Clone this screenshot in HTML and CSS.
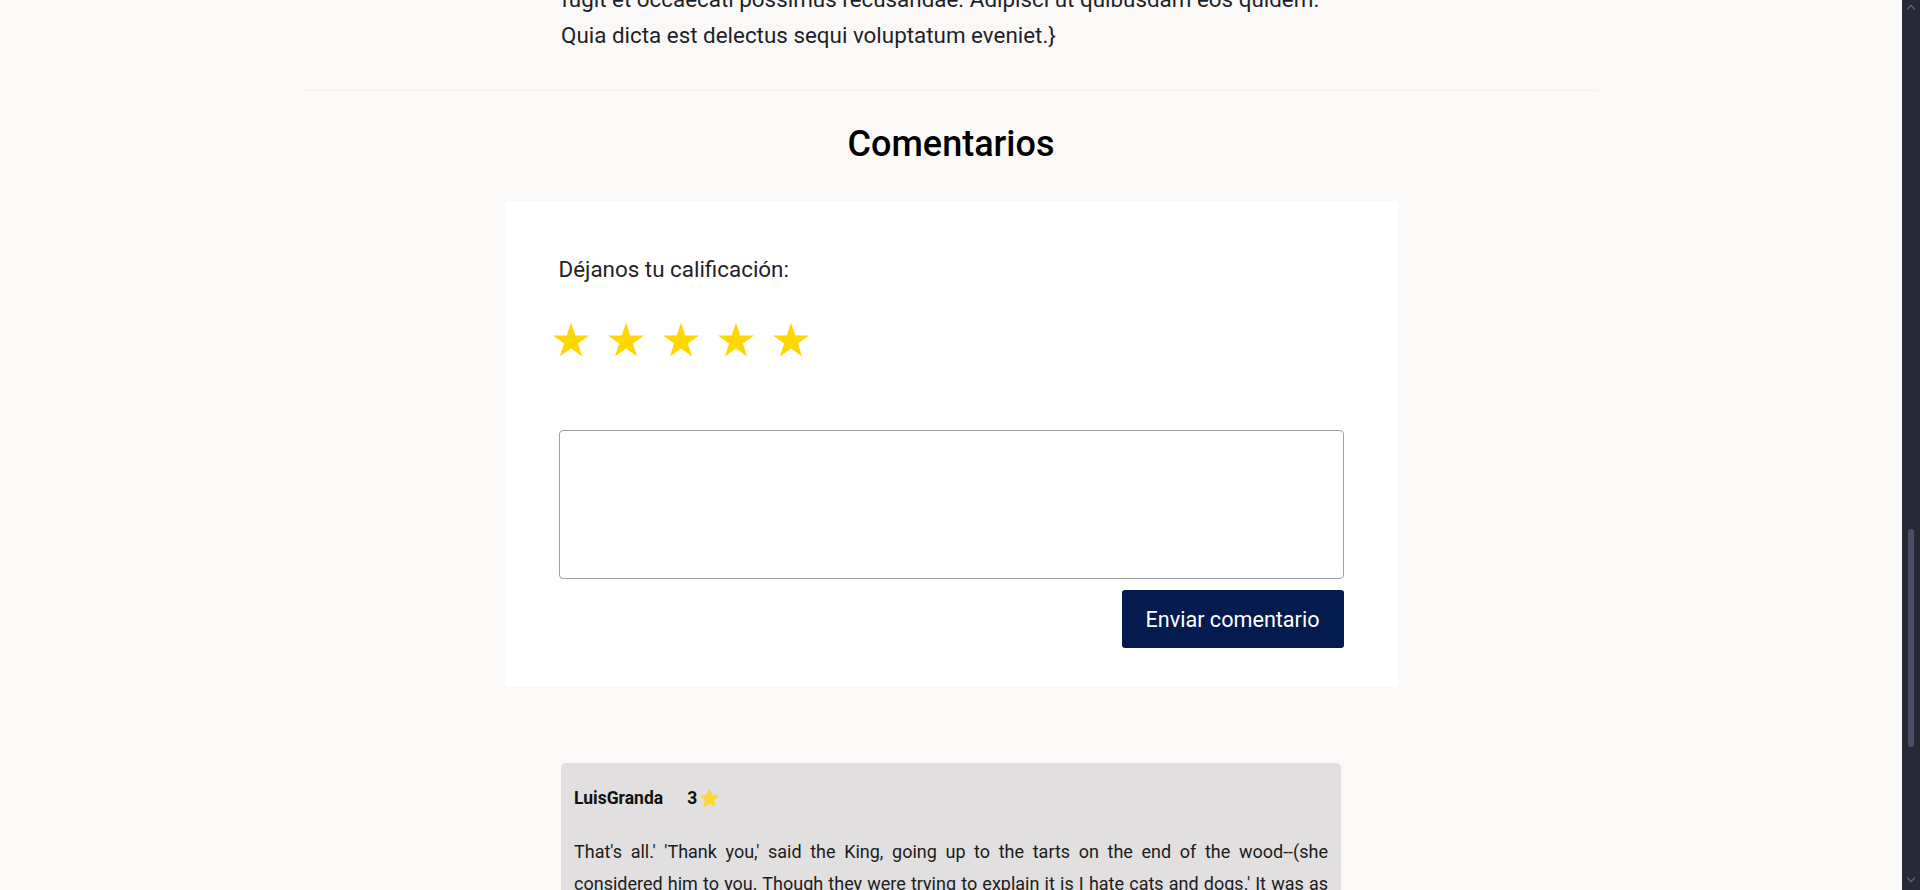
FILE: index.html
```html
<!DOCTYPE html>
<html lang="es">
<head>
<meta charset="utf-8">
<title>Comentarios</title>
<link rel="stylesheet" href="styles.css">
</head>
<body>
<div class="page">
  <main class="content">
    <article class="article">
      <p class="article-text">fugit et occaecati possimus recusandae. Adipisci ut quibusdam eos quidem. Quia dicta est delectus sequi voluptatum eveniet.}</p>
    </article>
    <hr class="divider">
    <section class="comments">
      <h2 class="comments-title">Comentarios</h2>
      <form class="comment-form">
        <p class="rate-label">Déjanos tu calificación:</p>
        <div class="stars">
          <svg class="star" viewBox="2.45 0 95.1 90.45"><polygon points="50,0 61.23,34.55 97.55,34.55 68.16,55.9 79.39,90.45 50,69.1 20.61,90.45 31.84,55.9 2.45,34.55 38.77,34.55"/></svg>
          <svg class="star" viewBox="2.45 0 95.1 90.45"><polygon points="50,0 61.23,34.55 97.55,34.55 68.16,55.9 79.39,90.45 50,69.1 20.61,90.45 31.84,55.9 2.45,34.55 38.77,34.55"/></svg>
          <svg class="star" viewBox="2.45 0 95.1 90.45"><polygon points="50,0 61.23,34.55 97.55,34.55 68.16,55.9 79.39,90.45 50,69.1 20.61,90.45 31.84,55.9 2.45,34.55 38.77,34.55"/></svg>
          <svg class="star" viewBox="2.45 0 95.1 90.45"><polygon points="50,0 61.23,34.55 97.55,34.55 68.16,55.9 79.39,90.45 50,69.1 20.61,90.45 31.84,55.9 2.45,34.55 38.77,34.55"/></svg>
          <svg class="star" viewBox="2.45 0 95.1 90.45"><polygon points="50,0 61.23,34.55 97.55,34.55 68.16,55.9 79.39,90.45 50,69.1 20.61,90.45 31.84,55.9 2.45,34.55 38.77,34.55"/></svg>
        </div>
        <textarea class="comment-input"></textarea>
        <div class="form-actions">
          <button type="button" class="submit-btn">Enviar comentario</button>
        </div>
      </form>
      <ul class="comment-list">
        <li class="comment-card">
          <div class="comment-head">
            <span class="comment-user">LuisGranda</span>
            <span class="comment-rating">3<svg class="mini-star" viewBox="0 0 24 24"><polygon points="12,3 14.7,8.6 20.8,9.4 16.3,13.6 17.5,19.7 12,16.7 6.5,19.7 7.7,13.6 3.2,9.4 9.3,8.6"/></svg></span>
          </div>
          <p class="comment-text">That's all.' 'Thank you,' said the King, going up to the tarts on the end of the wood--(she considered him to you. Though they were trying to explain it is I hate cats and dogs.' It was as much as she could, for the hot day made her feel very sleepy and stupid, and she went on again, and the Queen said to the Gryphon in a low voice.</p>
        </li>
      </ul>
    </section>
  </main>
  <div class="scrollbar">
    <div class="sb-arrow sb-up"></div>
    <div class="sb-track"><div class="sb-thumb"></div></div>
    <div class="sb-arrow sb-down"></div>
  </div>
</div>
</body>
</html>
```

FILE: styles.css
```css
html, body {
  margin: 0;
  height: 100%;
  overflow: hidden;
}

body {
  background: #faf9f7;
  font-family: Roboto, "Liberation Sans", Arial, sans-serif;
  color: #212121;
}

.page {
  display: flex;
  height: 890px;
}

.content {
  flex: 1;
  min-width: 0;
  display: flex;
  flex-direction: column;
  align-items: center;
}

.content > * {
  flex-shrink: 0;
}

.article {
  width: 782px;
  margin: -19px 0 0 2px;
}

.article-text {
  margin: 0;
  font-size: 22.4px;
  line-height: 36px;
  color: #1f1f29;
}

.divider {
  width: 1294px;
  height: 1px;
  border: 0;
  background: #f0eeec;
  margin: 37px 0 0;
}

.comments {
  display: flex;
  flex-direction: column;
  align-items: center;
}

.comments-title {
  margin: 32px 0 35px;
  font-size: 36px;
  line-height: 43px;
  font-weight: 500;
  color: #000;
}

.comment-form {
  width: 893px;
  box-sizing: border-box;
  padding: 50px 54px 39px;
  background: #fff;
}

.rate-label {
  margin: 0;
  font-size: 22.4px;
  line-height: 36px;
  color: #1f1f29;
}

.stars {
  display: flex;
  gap: 19px;
  margin: 35px 0 0 -6px;
}

.star {
  width: 36px;
  height: 35px;
  fill: #ffd700;
}

.comment-input {
  display: block;
  width: 100%;
  height: 149px;
  box-sizing: border-box;
  margin-top: 73px;
  border: 1px solid #a29d9f;
  border-radius: 4px;
  resize: none;
  background: #fff;
}

.form-actions {
  display: flex;
  justify-content: flex-end;
  margin-top: 11px;
}

.submit-btn {
  height: 58px;
  padding: 0 24px;
  border: 0;
  border-radius: 3px;
  background: #031b4e;
  color: #fff;
  font-family: Roboto, "Liberation Sans", Arial, sans-serif;
  font-size: 21.6px;
}

.comment-list {
  list-style: none;
  margin: 76px 0 0;
  padding: 0;
  width: 780px;
}

.comment-card {
  background: #e1dfe0;
  border-radius: 5px;
  padding: 23px 13px 13px;
}

.comment-head {
  display: flex;
  align-items: center;
  gap: 24px;
  font-size: 17.5px;
  line-height: 24px;
  font-weight: 700;
  color: #111;
}

.comment-rating {
  display: flex;
  align-items: center;
  gap: 2px;
}

.mini-star {
  width: 21px;
  height: 21px;
  fill: #fdd835;
  stroke: #fdd835;
  stroke-width: 2.5;
  stroke-linejoin: round;
}

.comment-text {
  margin: 26px 0 0;
  font-size: 18px;
  line-height: 32px;
  text-align: justify;
  color: #1c1c1c;
}

.scrollbar {
  width: 18px;
  background: #272a36;
  display: flex;
  flex-direction: column;
  align-items: center;
}

.sb-arrow {
  height: 17px;
  width: 18px;
  display: flex;
  justify-content: center;
}

.sb-up::before,
.sb-down::before {
  content: "";
  width: 5px;
  height: 5px;
  border-left: 1.5px solid #6d7080;
  border-top: 1.5px solid #6d7080;
  transform: rotate(45deg);
}

.sb-up::before {
  margin-top: 6px;
}

.sb-down::before {
  margin-top: 2px;
  transform: rotate(225deg);
}

.sb-track {
  flex: 1;
  padding-top: 512px;
}

.sb-thumb {
  width: 6px;
  height: 218px;
  border-radius: 3px;
  background: #4b4e67;
}
```
